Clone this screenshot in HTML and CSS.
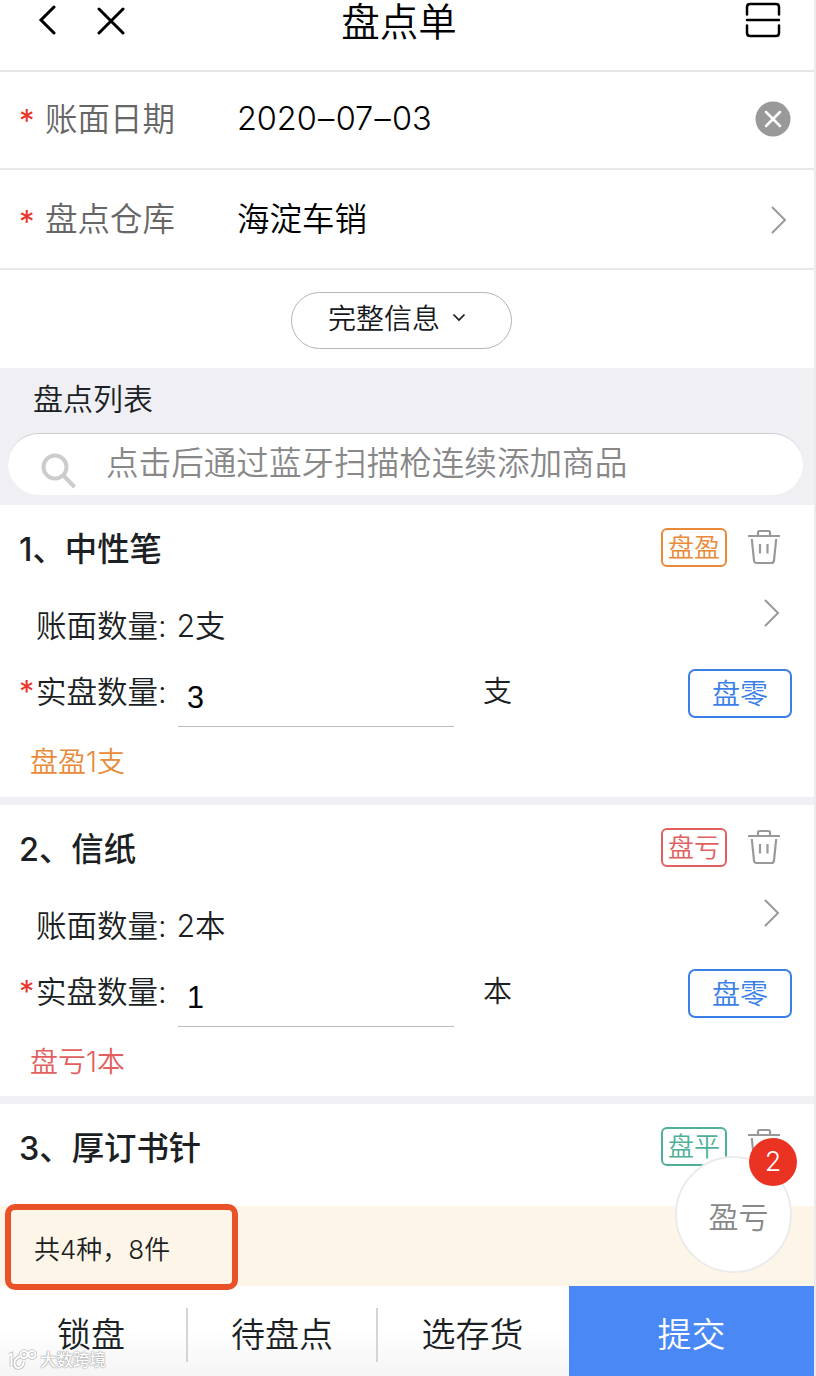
FILE: index.html
```html
<!DOCTYPE html>
<html lang="zh-CN">
<head>
<meta charset="utf-8">
<title>盘点单</title>
<link rel="stylesheet" href="styles.css">
</head>
<body>
<svg class="defs" width="0" height="0">
  <symbol id="trash" viewBox="0 0 34 36">
    <path d="M1 7H33M11 7V3.500Q11 2 12.500 2H21.500Q23 2 23 3.500V7M4.800 10L7 31.500Q7.300 34 9.500 34H24.500Q26.700 34 27 31.500L29.200 10M13 15V24.500M20.500 15V24.500"/>
  </symbol>
  <symbol id="next" viewBox="0 0 16 28">
    <path d="M1.500 1.500L14 14L1.500 26.500"/>
  </symbol>
</svg>
<div class="app">
  <header class="header">
    <div class="nav">
      <svg class="back" width="18" height="30" viewBox="0 0 18 30"><path d="M16 2L3 15L16 28"/></svg>
      <svg class="close" width="28" height="28" viewBox="0 0 28 28"><path d="M2 2L26 26M26 2L2 26"/></svg>
    </div>
    <h1 class="title">盘点单</h1>
    <svg class="scan" width="36" height="36" viewBox="0 0 36 36"><path d="M2 12.500V5Q2 2 5 2H31Q34 2 34 5V12.500M2 18H34M2 23.500V31Q2 34 5 34H31Q34 34 34 31V23.500"/></svg>
  </header>

  <div class="field field-date">
    <span class="star">*</span><span class="label">账面日期</span><span class="value date">2020<i>–</i>07<i>–</i>03</span>
    <svg class="clear" width="36" height="36" viewBox="0 0 36 36"><circle cx="18" cy="18" r="17.500"/><path d="M11 11L25 25M25 11L11 25"/></svg>
  </div>
  <div class="field field-store">
    <span class="star">*</span><span class="label">盘点仓库</span><span class="value">海淀车销</span>
    <svg class="chev" width="16" height="28"><use href="#next"/></svg>
  </div>

  <div class="more">
    <button class="pill">完整信息<svg width="14" height="9" viewBox="0 0 14 9"><path d="M1.500 1.500L7 7L12.500 1.500"/></svg></button>
  </div>

  <section class="list-head">
    <h2 class="list-title">盘点列表</h2>
    <div class="search">
      <svg width="36" height="36" viewBox="0 0 36 36"><circle cx="14" cy="14" r="11.500"/><path d="M22.500 22.500L33.500 34"/></svg>
      <span>点击后通过蓝牙扫描枪连续添加商品</span>
    </div>
  </section>

  <article class="item">
    <div class="item-head"><h3>1、中性笔</h3><span class="tag gain">盘盈</span><svg class="trash" width="34" height="36"><use href="#trash"/></svg></div>
    <div class="book"><span>账面数量:</span><span class="qty">2支</span><svg class="chev" width="16" height="28"><use href="#next"/></svg></div>
    <div class="actual"><span class="star">*</span><span class="name">实盘数量:</span><span class="input">3</span><span class="unit">支</span><button class="zero">盘零</button></div>
    <p class="note gain">盘盈1支</p>
  </article>

  <article class="item second">
    <div class="item-head"><h3>2、信纸</h3><span class="tag loss">盘亏</span><svg class="trash" width="34" height="36"><use href="#trash"/></svg></div>
    <div class="book"><span>账面数量:</span><span class="qty">2本</span><svg class="chev" width="16" height="28"><use href="#next"/></svg></div>
    <div class="actual"><span class="star">*</span><span class="name">实盘数量:</span><span class="input">1</span><span class="unit">本</span><button class="zero">盘零</button></div>
    <p class="note loss">盘亏1本</p>
  </article>

  <article class="item last">
    <div class="item-head"><h3>3、厚订书针</h3><span class="tag even">盘平</span><svg class="trash" width="34" height="36"><use href="#trash"/></svg></div>
  </article>

  <div class="summary">
    <span>共4种，8件</span>
    <div class="highlight"></div>
    <div class="float">盈亏<span class="count">2</span></div>
  </div>

  <footer class="actions">
    <span class="action">锁盘</span>
    <span class="action">待盘点</span>
    <span class="action">选存货</span>
    <span class="submit">提交</span>
    <div class="watermark">
      <svg width="30" height="22" viewBox="0 0 30 22"><g class="edge"><path d="M2 6L4.500 5V18M13 7L8 11Q6 18 11 19Q16 19 17 12"/><circle cx="17" cy="5.500" r="3.500"/><circle cx="25" cy="5.500" r="3.500"/></g><g class="core"><path d="M2 6L4.500 5V18M13 7L8 11Q6 18 11 19Q16 19 17 12"/><circle cx="17" cy="5.500" r="3.500"/><circle cx="25" cy="5.500" r="3.500"/></g></svg>
      <span>大数跨境</span>
    </div>
  </footer>
</div>
</body>
</html>
```
FILE: styles.css
```css
* { box-sizing: border-box; margin: 0; }
body {
  font-family: Inter, "Noto Sans CJK SC", sans-serif;
  font-weight: 350;
  color: #1c1f24;
  background: #fff;
}
svg { fill: none; flex: none; }
button { font: inherit; background: #fff; padding: 0; }
.defs { position: absolute; }
.app { width: 816px; height: 1376px; overflow: hidden; border-right: 2px solid #ebebeb; }

.header {
  display: grid; grid-template-columns: 1fr auto 1fr; align-items: start;
  height: 72px; border-bottom: 2px solid #e6e6e6;
}
.nav { display: flex; align-items: center; gap: 41px; padding: 5px 0 0 38px; }
.back, .close, .scan { stroke: #000; stroke-width: 3; stroke-linecap: round; }
.close { margin-top: 2px; }
.title { font-size: 38.500px; font-weight: 350; line-height: 45px; color: #000; padding-right: 16px; }
.scan { justify-self: end; margin: 2px 33px 0 0; stroke-width: 2.500; }

.field { display: flex; align-items: center; height: 98px; padding: 0 23px 2px 19px; border-bottom: 2px solid #e9e9e9; font-size: 32.500px; line-height: 48px; }
.field-date .label { padding-top: 1px; }
.field-store { height: 100px; padding: 1px 27px 0 19px; }
.star { color: #e8352b; font-weight: 400; }
.field .star { width: 26px; font-size: 31px; padding-top: 4px; }
.label { width: 192px; color: #666; }
.value { color: #000; }
.date { letter-spacing: -.1px; }
.date i { display: inline-block; width: 19px; text-align: center; font-style: normal; }
.clear { margin-left: auto; }
.clear circle { fill: #999; }
.clear path { stroke: #fff; stroke-width: 2.500; stroke-linecap: round; }
.chev { margin-left: auto; stroke: #999; stroke-width: 2; stroke-linecap: round; }

.more { display: flex; height: 98px; padding: 22px 0 0 291px; }
.pill {
  display: flex; align-items: center; gap: 12px; width: 221px; height: 57px; padding: 0 0 7px 36px;
  border: 1px solid #b5b5b5; border-radius: 29px; font-size: 28px; color: #16181c;
}
.pill svg { stroke: #16181c; stroke-width: 1.700; }

.list-head { height: 137px; background: #efeff4; padding: 0 11px 0 8px; }
.list-title { height: 65px; padding: 0 0 0 25px; font-size: 30px; font-weight: 350; line-height: 63px; }
.search {
  display: flex; height: 62px; padding-left: 33px; border-radius: 31px; background: #fff;
  border-top: 1px solid #d0d0d4; font-size: 32.600px; line-height: 59px; color: #888;
}
.search svg { margin: 19px 29px 0 0; stroke: #ccc; stroke-width: 4; }

.item { height: 300px; border-bottom: 8px solid #efeff4; }
.second { height: 299px; }
.last { height: 102px; border: 0; }
.item-head { display: flex; align-items: center; height: 88px; padding: 0 33px 4px 19px; }
.item-head h3 { flex: 1; font-size: 32.400px; font-weight: 500; line-height: 44px; padding-top: 5px; }
.tag { width: 66px; height: 39px; border: 2px solid; border-radius: 6px; font-size: 26px; line-height: 35px; text-align: center; }
.trash { margin-left: 20px; stroke: #999; stroke-width: 2.200; }
.gain { color: #e98a38; }
.loss { color: #e25f60; }
.even { color: #4fb09a; }
.book { display: flex; align-items: center; height: 66px; padding: 0 34px 0 36px; font-size: 30.500px; line-height: 44px; }
.book .qty { margin-left: 10px; letter-spacing: -.4px; }
.book .chev { margin-bottom: 26px; }
.actual { display: flex; height: 70px; padding: 0 22px 0 19px; font-size: 30.500px; line-height: 66px; }
.actual .star { width: 17px; }
.actual .name { width: 142px; }
.input { width: 276px; height: 68px; padding: 10px 0 0 9px; border-bottom: 1px solid #bbb; font-family: "Liberation Sans", sans-serif; font-weight: 400; line-height: 56px; color: #000; }
.unit { margin-left: 29px; font-size: 29px; }
.zero { width: 104px; height: 49px; margin: 10px 0 0 auto; border: 2px solid #3a7fe8; border-radius: 7px; color: #3a7fe8; font-size: 28px; line-height: 45px; padding-top: 1px; }
.note { padding-left: 30px; font-size: 28px; line-height: 67px; }

.summary { position: relative; height: 80px; padding-left: 34px; background: #fef5e9; font-size: 26px; line-height: 88px; }
.highlight { position: absolute; left: 5px; top: -2px; width: 233px; height: 86px; border: 6px solid #e95229; border-radius: 10px; z-index: 1; }
.float {
  position: absolute; left: 675px; top: -50px; width: 117px; height: 117px; border: 2px solid #ebebeb;
  border-radius: 50%; background: #fff; color: #888; font-size: 30px; line-height: 118px; padding-left: 10px; text-align: center;
}
.count { position: absolute; left: 72px; top: -20px; width: 48px; height: 48px; border-radius: 50%; background: #ea3323; color: #fff; font-size: 27px; line-height: 48px; }

.actions { position: relative; display: grid; grid-template-columns: 188px 190px 191px 245px; height: 90px; font-size: 34px; line-height: 98px; text-align: center; background: linear-gradient(#fff 45%, #f5f5f5); }
.action { background: linear-gradient(#d5d5d5, #d5d5d5) right 22px / 2px 54px no-repeat; }
.action:first-child { padding-right: 6px; }
.action:nth-child(2), .action:nth-child(3) { padding-right: 2px; }
.action:nth-child(3) { background: none; }
.submit { background: #4a88f6; color: #fff; }
.watermark { position: absolute; left: 7px; top: 61px; display: flex; align-items: center; gap: 3px; font-size: 16.500px; font-weight: 500; line-height: 26px; color: #fff; text-shadow: 0 0 1px #888, 0 0 2px #999; }
.edge { stroke: #bbb; stroke-width: 3.600; }
.core { stroke: #fff; stroke-width: 2; }
```
